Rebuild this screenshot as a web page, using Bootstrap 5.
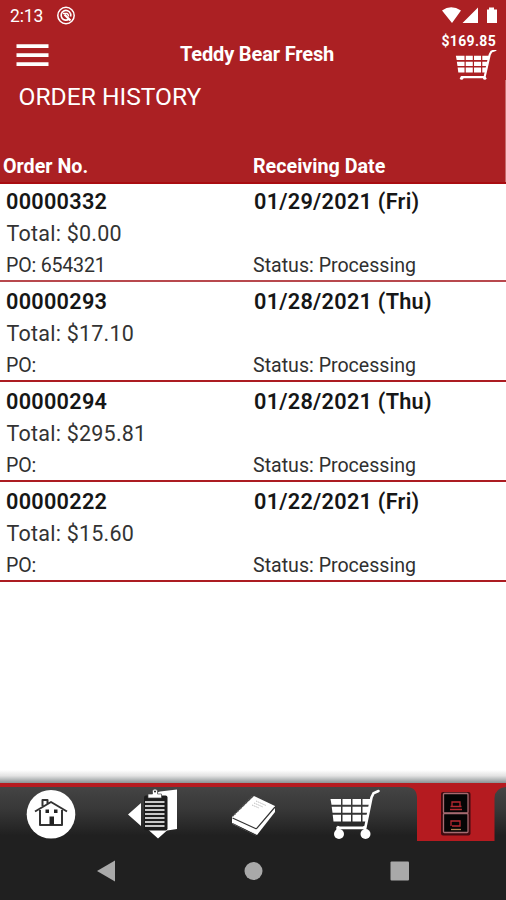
<!DOCTYPE html>
<html lang="en">
<head>
<meta charset="utf-8">
<meta name="viewport" content="width=device-width, initial-scale=1">
<title>Order History</title>
<link href="https://cdn.jsdelivr.net/npm/bootstrap@5.3.0/dist/css/bootstrap.min.css" rel="stylesheet">
<style>
body{font-family:Roboto,"Liberation Sans",sans-serif;color:#161616;height:900px;overflow:hidden}
svg{display:block;flex:none}
.top-area{background:#ab2023;height:184px;border-bottom:2px solid #a90d12;position:relative}
.edge-line{position:absolute;right:0;top:80px;bottom:0;width:1px;background:#c66a6c}
.status-bar{height:32px;padding:0 8px 0 10px}
.clock{font-size:17.5px;line-height:32px;width:46px;letter-spacing:-.1px}
.app-bar{height:48px;display:grid;grid-template-columns:1fr auto 1fr}
.app-title{font-size:20px;font-weight:700;line-height:45px;letter-spacing:-.15px;padding-left:8px}
.amount{font-size:14px;font-weight:700;line-height:18px;letter-spacing:.32px;padding-right:10px}
.page-title{font-size:24.6px;line-height:34px;height:69px;padding-left:18.5px;font-weight:400}
.col-heads{font-size:19.7px;font-weight:700;line-height:35px}
.head-no{padding-left:3px}
.half{width:50%}
.order{height:100px;border-bottom:2px solid #ac1c22;padding-top:3px}
.order:first-child{height:98px;border-color:#b8484d;padding-top:1px}
.order-no{font-size:21.7px;font-weight:600;line-height:34px;padding-left:6px;letter-spacing:.26px}
.order-date{padding-left:1px}
.total{font-size:21.5px;line-height:30px;padding-left:6.5px;font-weight:400;color:#333;letter-spacing:.23px}
.detail{font-size:19.6px;line-height:33px;color:#303030}
.po{padding-left:6px;letter-spacing:-.2px}
.shade{height:13px;background:linear-gradient(#fff,#e2e2e2 45%,#8b9294)}
.tabs{height:59px;border-top:4px solid #b51b20;background:linear-gradient(#444,#383838 40%,#202020 88%)}
.sys{height:58px;background:#202020}
</style>
<script src="https://cdn.jsdelivr.net/npm/bootstrap@5.3.0/dist/js/bootstrap.bundle.min.js"></script>
</head>
<body class="d-flex flex-column bg-white">
<svg width="0" height="0" class="position-absolute" aria-hidden="true">
  <defs>
    <g id="basket">
      <path fill="#fff" d="M0 9.500h10.500v5.500H1zm12 0h8.500v5.500h-8.500zm10 0h8.500v5.500h-8.500zm10 0h9l-1.500 5.500h-7.500zM1.200 17h9.300v5.500H2zm10.800 0h8.500v5.500h-8.500zm10 0h8.500v5.500h-8.500zm10 0h7L37.500 22.500h-5.500zM2.200 24.500h8.300v6.500H3zm9.800 0h8.500v6.500h-8.500zm10 0h8.500v6.500h-8.500zm10 0h5.500l-1 6.500h-4.500z"/>
      <path fill="none" stroke="#fff" stroke-width="2.600" stroke-linecap="round" d="M48 2 43 4 41 8 35 36M7 37h28"/>
    </g>
  </defs>
</svg>
<header class="top-area text-white flex-shrink-0">
  <div class="status-bar d-flex align-items-center">
    <span class="clock">2:13</span>
    <svg width="20" height="20" viewBox="0 0 20 20" fill="none" stroke="#fff"><circle cx="10" cy="9.500" r="8.200" stroke-width="1.500"/><path stroke-width="1.700" d="M13 13A4.800 4.800 0 1 1 14.400 7.500M14.700 7.500v3"/><path stroke-width="2.200" d="m8.500 8.500 6 6"/><path stroke-width="1.400" d="M7 7.500h4q1.500.5 1.500 3"/></svg>
    <svg class="ms-auto" width="56" height="18" viewBox="0 0 56 18" fill="#fff"><path d="M0 3.500Q9-3 19 3.500L10 16zM20.500 16 36 .500V16zM47 .500h5v2h3V16H45V2.500h2z"/></svg>
  </div>
  <div class="app-bar">
    <svg class="mt-2 ms-3" width="34" height="30" viewBox="0 0 34 30" fill="#fff"><path d="M.5 4.300h32V8H.5zM.5 13.300h32V17H.5zM.5 22.300h32V26H.5z"/></svg>
    <div class="app-title">Teddy Bear Fresh</div>
    <div class="d-flex flex-column align-items-end">
      <span class="amount">$169.85</span>
      <svg class="me-2" width="43" height="31" viewBox="-1 2 52 40" preserveAspectRatio="none"><use href="#basket"/><circle cx="7" cy="38.500" r="2" fill="#fff"/><circle cx="35" cy="38.500" r="2" fill="#fff"/></svg>
    </div>
  </div>
  <h1 class="page-title mb-0">ORDER HISTORY</h1>
  <div class="col-heads d-flex"><span class="half head-no">Order No.</span><span class="half">Receiving Date</span></div>
  <span class="edge-line"></span>
</header>
<main class="flex-grow-1">
  <section class="order">
    <div class="d-flex order-no p-0"><span class="half order-no">00000332</span><span class="half order-date">01/29/2021 (Fri)</span></div>
    <div class="total">Total: $0.00</div>
    <div class="d-flex detail"><span class="half po">PO: 654321</span><span class="half">Status: Processing</span></div>
  </section>
  <section class="order">
    <div class="d-flex order-no p-0"><span class="half order-no">00000293</span><span class="half order-date">01/28/2021 (Thu)</span></div>
    <div class="total">Total: $17.10</div>
    <div class="d-flex detail"><span class="half po">PO:</span><span class="half">Status: Processing</span></div>
  </section>
  <section class="order">
    <div class="d-flex order-no p-0"><span class="half order-no">00000294</span><span class="half order-date">01/28/2021 (Thu)</span></div>
    <div class="total">Total: $295.81</div>
    <div class="d-flex detail"><span class="half po">PO:</span><span class="half">Status: Processing</span></div>
  </section>
  <section class="order">
    <div class="d-flex order-no p-0"><span class="half order-no">00000222</span><span class="half order-date">01/22/2021 (Fri)</span></div>
    <div class="total">Total: $15.60</div>
    <div class="d-flex detail"><span class="half po">PO:</span><span class="half">Status: Processing</span></div>
  </section>
</main>
<div class="shade flex-shrink-0"></div>
<nav class="tabs d-flex flex-shrink-0">
  <!-- home -->
  <svg width="101" height="55" viewBox="0 0 101 55"><circle cx="51" cy="27.300" r="24.300" fill="#fff"/><g fill="none" stroke="#333" stroke-width="2"><path d="M35 24.500 51 15l16 9.500M40 23v15h22V23M42.500 19v-6h5v3.500" stroke-linejoin="round"/></g><path fill="#222" d="M45.500 22.500h3.500v3.500h-3.500zM54 22.500h3.500v3.500H54zM49.500 29.500h4.500v8.500h-4.500z"/></svg>
  <!-- clipboard -->
  <svg width="101" height="55" viewBox="101 -2.500 101 55"><path fill="#fff" d="m128 25 13-11.500v23zM150 6l10-4 17-2v39.500l-10 1.500-9 8-10-9z"/><rect x="144" y="6" width="23.500" height="35" rx="2" fill="#1d1d1d"/><path stroke="#fff" stroke-width="1.400" d="M145 12.500h19.500M145 16.500h19.500M145 20.500h19.500M145 24.500h19.500M145 28.500h19.500M145 32.500h19.500M145 36.500h19.500"/><path fill="#fff" stroke="#444" stroke-width=".7" d="M148 8.500V4.500h4.500V2a2.500 2.500 0 0 1 5 0v2.500h4v4z"/><circle cx="155" cy="2" r="1" fill="#222"/></svg>
  <!-- book -->
  <svg width="101" height="55" viewBox="202 0 101 55"><path fill="#fff" d="M254 9 275 19v6L257 48 232 36v-6z"/><path fill="none" stroke="#333" stroke-width="1.200" d="m232.500 31 23 10.500q1 .500 1.500-.500L275 20"/><path fill="none" stroke="#555" stroke-width="1.500" stroke-dasharray="1.200 1" d="m233 37 23 11M233 29l20-20.500"/><path fill="none" stroke="#aaa" stroke-width=".8" stroke-dasharray="1.500 .8" d="m256 14 10 4.500M254 16l9 4M252 18l7 3"/></svg>
  <!-- cart -->
  <svg width="101" height="55" viewBox="303 0 101 55"><use href="#basket" transform="translate(330.500 2) scale(1 1.050)"/><path d="m338.500 39-2 6M364 39l2 6" fill="none" stroke="#fff" stroke-width="2"/><circle cx="339" cy="47" r="5" fill="#fff"/><circle cx="365.500" cy="47" r="5" fill="#fff"/></svg>
  <!-- filing cabinet -->
  <svg width="102" height="55" viewBox="404 0 102 55"><path fill="#b51b20" d="M406 0h100q-11 1-11.500 11v43H417V11Q417 0 406 0z"/><rect x="441" y="5" width="29.500" height="43.500" rx="2" fill="#400b10"/><g fill="#050505" stroke="#a66a70" stroke-width="1.300"><rect x="443.500" y="6.500" width="24.500" height="19.500" rx="1"/><rect x="443.500" y="26.500" width="24.500" height="19" rx="1"/></g><g fill="none" stroke="#b52930" stroke-width="1.300"><path d="M452 19v-4h8v4M450.500 19.500h11M450 22.500h12"/><path d="M451 39v-5h9v5h-8"/><path d="M451 42.500h10" stroke="#b08055"/></g></svg>
</nav>
<footer class="sys flex-shrink-0">
  <svg width="506" height="58" viewBox="0 0 506 58" fill="#a9a9a9"><path d="M97 29 115 18.500v21z"/><circle cx="253.500" cy="29" r="9"/><rect x="390.500" y="19.500" width="18.500" height="19" rx="1"/></svg>
</footer>
</body>
</html>
